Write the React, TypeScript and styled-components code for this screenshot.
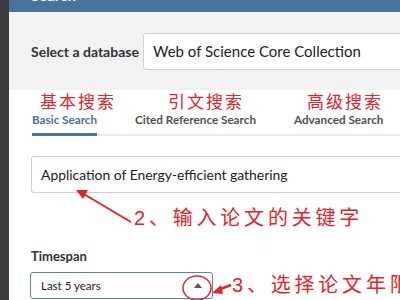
import React from 'react'
import styled, { createGlobalStyle } from 'styled-components'

const GlobalStyle = createGlobalStyle`
  html, body {
    margin: 0;
    padding: 0;
    width: 400px;
    height: 300px;
    overflow: hidden;
    background: #ffffff;
  }
  body {
    font-family: Lato, "Noto Sans", sans-serif;
  }
`

const RED = '#e3232b'

const Page = styled.div`
  position: relative;
  display: flex;
  width: 400px;
  height: 300px;
  overflow: hidden;
`

const Strip = styled.div`
  width: 9px;
  flex: none;
  background: #3d3d3d;
`

const Main = styled.div`
  flex: 1;
  display: flex;
  flex-direction: column;
  min-width: 0;
`

const TopBar = styled.div`
  height: 12px;
  flex: none;
  background: #4a739b;
  overflow: hidden;
  padding-left: 22px;
`

const TopTitle = styled.div`
  margin-top: -12px;
  color: #ffffff;
  font-weight: 700;
  font-size: 15px;
  line-height: 15px;
`

const DbPanel = styled.div`
  height: 78px;
  flex: none;
  background: #f2f2f2;
  display: flex;
  align-items: center;
  padding-left: 22px;
`

const DbLabel = styled.div`
  width: 112px;
  flex: none;
  font-weight: 700;
  font-size: 14px;
  color: #333333;
  white-space: nowrap;
`

const Box = styled.div<{ $accent?: boolean }>`
  box-sizing: border-box;
  display: flex;
  align-items: center;
  background: #ffffff;
  border: 1px solid ${(p) => (p.$accent ? '#5d82aa' : '#cfcfcf')};
  border-radius: 3px;
  color: #222222;
  white-space: nowrap;
`

const DbSelect = styled(Box)`
  flex: 1;
  height: 37px;
  margin-right: -12px;
  padding-left: 9px;
  font-size: 15px;
`

const TabBar = styled.div`
  position: relative;
  display: flex;
  gap: 38px;
  height: 44px;
  margin-left: 23px;
  border-bottom: 2px solid #e9e9e9;
  flex: none;
`

const Tab = styled.div<{ $active?: boolean }>`
  position: relative;
  box-sizing: border-box;
  height: 46px;
  padding-top: 20px;
  font-size: 11.7px;
  font-weight: 700;
  line-height: 18px;
  white-space: nowrap;
  color: ${(p) => (p.$active ? '#4d6f96' : '#505050')};
  border-bottom: 3px solid ${(p) => (p.$active ? '#4f7399' : 'transparent')};
  margin-bottom: -2px;
`

const Note = styled.span<{ $left: number }>`
  position: absolute;
  top: 1px;
  left: ${(p) => p.$left}px;
  font-family: "Noto Sans CJK SC", sans-serif;
  font-size: 17px;
  line-height: 20px;
  font-weight: 400;
  letter-spacing: 2px;
  color: ${RED};
`

const Body = styled.div`
  display: flex;
  flex-direction: column;
  padding-left: 22px;
`

const QueryInput = styled(Box)`
  margin-top: 20px;
  height: 37px;
  margin-right: -12px;
  padding-left: 9px;
  font-size: 13.9px;
`

const FieldLabel = styled.div`
  margin-top: 55px;
  font-size: 13px;
  line-height: 16px;
  font-weight: 700;
  color: #333333;
`

const SpanSelect = styled(Box)`
  margin-top: 8px;
  margin-left: -1px;
  width: 183px;
  height: 27px;
  padding: 0 10px 0 10px;
  justify-content: space-between;
  font-size: 11.5px;
`

const Caret = styled.span`
  width: 0;
  height: 0;
  border-left: 4.5px solid transparent;
  border-right: 4.5px solid transparent;
  border-bottom: 5px solid #555555;
`

const Callout = styled.div<{ $x: number; $y: number }>`
  position: absolute;
  left: ${(p) => p.$x}px;
  top: ${(p) => p.$y}px;
  font-family: "Liberation Sans", "Noto Sans CJK SC", sans-serif;
  font-size: 20px;
  line-height: 24px;
  letter-spacing: 3.8px;
  color: ${RED};
  white-space: nowrap;
`

const Marks = styled.svg`
  position: absolute;
  left: 0;
  top: 0;
  pointer-events: none;
`

export default function App() {
  return (
    <>
      <GlobalStyle />
      <Page>
        <Strip />
        <Main>
          <TopBar>
            <TopTitle>Search</TopTitle>
          </TopBar>
          <DbPanel>
            <DbLabel>Select a database</DbLabel>
            <DbSelect>Web of Science Core Collection</DbSelect>
          </DbPanel>
          <TabBar>
            <Tab $active>
              <Note $left={8}>基本搜索</Note>
              Basic Search
            </Tab>
            <Tab>
              <Note $left={33}>引文搜索</Note>
              Cited Reference Search
            </Tab>
            <Tab>
              <Note $left={13}>高级搜索</Note>
              Advanced Search
            </Tab>
          </TabBar>
          <Body>
            <QueryInput>Application of Energy-efficient gathering</QueryInput>
            <FieldLabel>Timespan</FieldLabel>
            <SpanSelect $accent>
              Last 5 years
              <Caret />
            </SpanSelect>
          </Body>
        </Main>
        <Callout $x={134} $y={206}>2、输入论文的关键字</Callout>
        <Callout $x={232} $y={273}>3、选择论文年限</Callout>
        <Marks width="400" height="300" viewBox="0 0 400 300">
          <g stroke={RED} fill="none" strokeWidth="2">
            <line x1="131" y1="222" x2="82" y2="193" />
            <ellipse cx="197" cy="288" rx="14" ry="12" strokeWidth="1.5" />
          </g>
          <polygon points="76,190 88,190 83,199" fill={RED} />
          <line x1="231" y1="285" x2="218" y2="290" stroke={RED} strokeWidth="2.5" />
          <polygon points="212,293 221,285 223,294" fill={RED} />
        </Marks>
      </Page>
    </>
  )
}
